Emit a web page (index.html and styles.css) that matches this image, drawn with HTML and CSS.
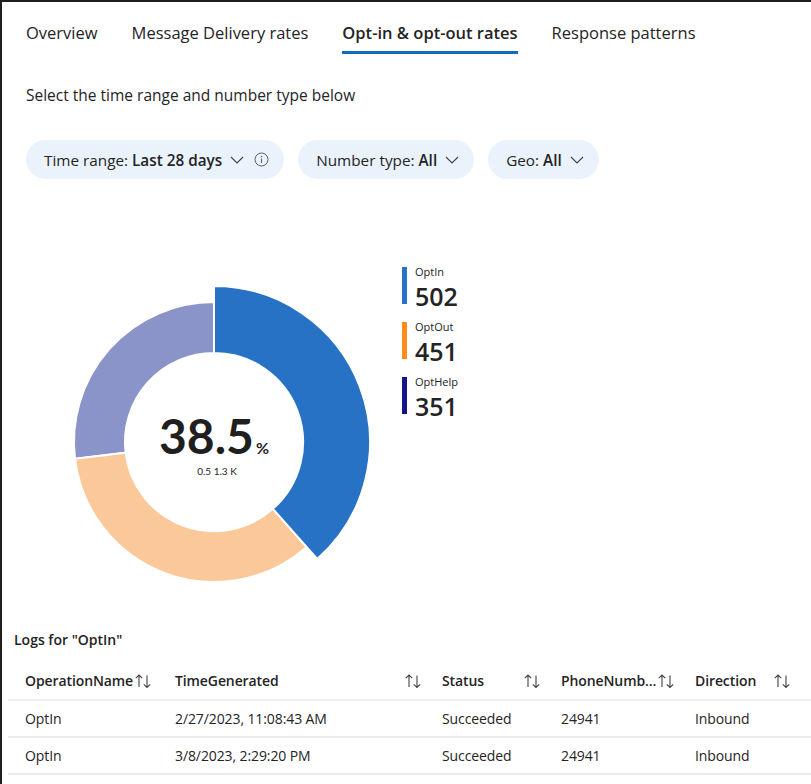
FILE: index.html
```html
<!DOCTYPE html>
<html lang="en">
<head>
<meta charset="utf-8">
<title>Opt-in &amp; opt-out rates</title>
<link rel="stylesheet" href="styles.css">
</head>
<body>
<div class="frame">
  <nav class="tabs">
    <div class="tab">Overview</div>
    <div class="tab">Message Delivery rates</div>
    <div class="tab active">Opt-in &amp; opt-out rates</div>
    <div class="tab">Response patterns</div>
  </nav>

  <p class="subtitle">Select the time range and number type below</p>

  <div class="filters">
    <div class="pill">
      <span class="pill-label">Time range: <b>Last 28 days</b></span>
      <svg class="chev" width="14" height="8" viewBox="0 0 14 8"><path d="M1 1 L7 7 L13 1" fill="none" stroke="#424242" stroke-width="1.1"/></svg>
      <svg class="info" width="15" height="15" viewBox="0 0 15 15"><circle cx="7.5" cy="7.5" r="6.5" fill="none" stroke="#616161" stroke-width="1"/><circle cx="7.5" cy="4.6" r="0.8" fill="#616161"/><path d="M7.5 6.6 V11" stroke="#616161" stroke-width="1.1"/></svg>
    </div>
    <div class="pill">
      <span class="pill-label">Number type: <b>All</b></span>
      <svg class="chev" width="14" height="8" viewBox="0 0 14 8"><path d="M1 1 L7 7 L13 1" fill="none" stroke="#424242" stroke-width="1.1"/></svg>
    </div>
    <div class="pill">
      <span class="pill-label">Geo: <b>All</b></span>
      <svg class="chev" width="14" height="8" viewBox="0 0 14 8"><path d="M1 1 L7 7 L13 1" fill="none" stroke="#424242" stroke-width="1.1"/></svg>
    </div>
  </div>

  <section class="chart">
    <div class="donut">
      <svg width="340" height="340" viewBox="0 0 340 340">
        <path d="M31.0,186.8 A140,140 0 0 1 170,30 L170,81 A89,89 0 0 0 81.6,180.7 Z" fill="#8a94c8" stroke="#fff" stroke-width="2"/>
        <path d="M262.6,275.0 A140,140 0 0 1 31.0,186.8 L81.6,180.7 A89,89 0 0 0 228.9,236.8 Z" fill="#fbc89a" stroke="#fff" stroke-width="2"/>
        <path d="M170,14 A156,156 0 0 1 273.2,287.0 L228.9,236.8 A89,89 0 0 0 170,81 Z" fill="#2872c6" stroke="#fff" stroke-width="2"/>
      </svg>
      <div class="donut-label">
        <div class="big">38.5<span class="pct">%</span></div>
        <div class="small">0.5 1.3 K</div>
      </div>
    </div>
    <ul class="legend">
      <li class="legend-item"><span class="bar in"></span><span class="legend-text"><span class="lname">OptIn</span><span class="lval">502</span></span></li>
      <li class="legend-item"><span class="bar out"></span><span class="legend-text"><span class="lname">OptOut</span><span class="lval">451</span></span></li>
      <li class="legend-item"><span class="bar help"></span><span class="legend-text"><span class="lname">OptHelp</span><span class="lval">351</span></span></li>
    </ul>
  </section>

  <h2 class="logs-title">Logs for "OptIn"</h2>

  <div class="table">
    <div class="row head">
      <div class="cell c1"><span>OperationName</span><svg class="sort" width="18" height="16" viewBox="0 0 18 16"><path d="M5 14 V2 M1.8 5.2 L5 2 L8.2 5.2 M13 2.5 V14.5 M9.8 11.3 L13 14.5 L16.2 11.3" fill="none" stroke="#424242" stroke-width="1.1"/></svg></div>
      <div class="cell c2"><span>TimeGenerated</span><svg class="sort" width="18" height="16" viewBox="0 0 18 16"><path d="M5 14 V2 M1.8 5.2 L5 2 L8.2 5.2 M13 2.5 V14.5 M9.8 11.3 L13 14.5 L16.2 11.3" fill="none" stroke="#424242" stroke-width="1.1"/></svg></div>
      <div class="cell c3"><span>Status</span><svg class="sort" width="18" height="16" viewBox="0 0 18 16"><path d="M5 14 V2 M1.8 5.2 L5 2 L8.2 5.2 M13 2.5 V14.5 M9.8 11.3 L13 14.5 L16.2 11.3" fill="none" stroke="#424242" stroke-width="1.1"/></svg></div>
      <div class="cell c4"><span>PhoneNumb...</span><svg class="sort" width="18" height="16" viewBox="0 0 18 16"><path d="M5 14 V2 M1.8 5.2 L5 2 L8.2 5.2 M13 2.5 V14.5 M9.8 11.3 L13 14.5 L16.2 11.3" fill="none" stroke="#424242" stroke-width="1.1"/></svg></div>
      <div class="cell c5"><span>Direction</span><svg class="sort" width="18" height="16" viewBox="0 0 18 16"><path d="M5 14 V2 M1.8 5.2 L5 2 L8.2 5.2 M13 2.5 V14.5 M9.8 11.3 L13 14.5 L16.2 11.3" fill="none" stroke="#424242" stroke-width="1.1"/></svg></div>
    </div>
    <div class="row">
      <div class="cell">OptIn</div>
      <div class="cell">2/27/2023, 11:08:43 AM</div>
      <div class="cell">Succeeded</div>
      <div class="cell">24941</div>
      <div class="cell">Inbound</div>
    </div>
    <div class="row">
      <div class="cell">OptIn</div>
      <div class="cell">3/8/2023, 2:29:20 PM</div>
      <div class="cell">Succeeded</div>
      <div class="cell">24941</div>
      <div class="cell">Inbound</div>
    </div>
  </div>
</div>
</body>
</html>
```
FILE: styles.css
```css
* { box-sizing: border-box; }
html, body { margin: 0; padding: 0; background: #fff; }
body {
  font-family: "Open Sans", "Noto Sans", sans-serif;
  color: #242424;
}
.frame {
  width: 811px;
  height: 784px;
  overflow: hidden;
  border-top: 2px solid #1f1f1f;
  border-left: 2px solid #1f1f1f;
}

/* tabs */
.tabs {
  display: flex;
  gap: 34px;
  padding-left: 24px;
}
.tab {
  font-size: 16.5px;
  line-height: 20px;
  padding-top: 21px;
  padding-bottom: 8px;
  border-bottom: 3px solid transparent;
  color: #242424;
}
.tab.active {
  font-weight: 600;
  border-bottom-color: #0f6cbd;
}

.subtitle {
  margin: 31px 0 0 24px;
  font-size: 15.5px;
  line-height: 20px;
}

/* filter pills */
.filters {
  display: flex;
  gap: 14px;
  margin: 35px 0 0 24px;
}
.pill {
  display: flex;
  align-items: center;
  height: 39px;
  padding: 0 15px 0 18px;
  border-radius: 20px;
  background: #eaf3fc;
  font-size: 15.3px;
}
.pill b { font-weight: 600; }
.chev { margin-left: 8px; }
.info { margin-left: 10px; }

/* chart */
.chart {
  display: flex;
  align-items: flex-start;
  margin: 88px 0 0 42px;
}
.donut {
  display: grid;
  margin-top: 5px;
}
.donut > svg, .donut-label {
  grid-area: 1 / 1;
}
.donut svg { display: block; }
.donut-label {
  align-self: start;
  justify-self: center;
  text-align: center;
  padding-top: 135px;
  font-family: Lato, "Open Sans", sans-serif;
}
.big {
  font-size: 48px;
  font-weight: 700;
  line-height: 58px;
  color: #1f1f1f;
}
.pct {
  font-size: 16px;
  line-height: 0;
  margin-left: 2px;
}
.small {
  font-size: 10px;
  line-height: 12px;
  margin-left: 6px;
}

.legend {
  list-style: none;
  margin: -3px 0 0 18px;
  padding: 0;
  display: flex;
  flex-direction: column;
  gap: 6px;
}
.legend-item {
  display: flex;
  align-items: flex-start;
  gap: 8px;
}
.bar {
  width: 5px;
  height: 37px;
  margin-top: 3px;
}
.bar.in { background: #2872c6; }
.bar.out { background: #ff8c1a; }
.bar.help { background: #15148a; }
.legend-text {
  display: flex;
  flex-direction: column;
}
.lname {
  font-size: 11px;
  line-height: 15px;
}
.lval {
  font-size: 25px;
  font-weight: 600;
  line-height: 34px;
}

/* logs */
.logs-title {
  margin: 18px 0 0 12px;
  font-size: 14px;
  font-weight: 600;
  line-height: 20px;
}
.table {
  margin: 12px 0 0 6px;
}
.row {
  display: grid;
  grid-template-columns: 150px 267px 119px 134px 116px;
  padding-left: 9px;
  height: 37px;
  align-items: center;
  border-bottom: 2px solid #ebebeb;
  font-size: 14px;
  letter-spacing: -0.1px;
}
.row.head {
  height: 39px;
  font-weight: 600;
  border-bottom-color: #f0f0f0;
}
.cell {
  padding: 0 12px 0 8px;
  white-space: nowrap;
}
.head .cell {
  display: flex;
  align-items: center;
  justify-content: space-between;
}
.head .c1, .head .c4 {
  justify-content: flex-start;
  gap: 1px;
}
.sort { flex: none; }
```
